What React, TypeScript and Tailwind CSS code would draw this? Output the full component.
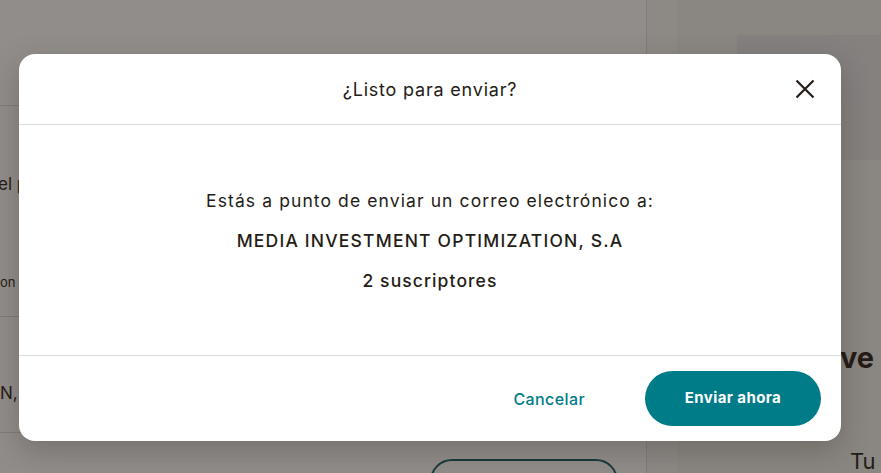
function CloseIcon() {
  return (
    <svg width="20" height="20" viewBox="0 0 20 20" fill="none" stroke="currentColor" strokeWidth="2.2">
      <path d="M1.5 1.5 L18.5 18.5 M18.5 1.5 L1.5 18.5" />
    </svg>
  );
}

function PageBehind() {
  return (
    <div className="flex h-[473px] w-[881px] bg-white text-[#241c15]">
      <div className="flex w-[647px] shrink-0 flex-col border-r border-[#e0e0e0]">
        <div className="h-[106px] shrink-0 border-b border-[#dcdcdc]" />
        <div className="flex h-[211px] shrink-0 flex-col border-b border-[#dcdcdc] pt-[66px]">
          <p className="-ml-[2px] text-[17px] leading-6">el proyecto</p>
          <p className="mt-[76px] text-[13px] leading-5">on</p>
        </div>
        <div className="flex h-[116px] shrink-0 flex-col border-b border-[#dcdcdc] pt-[64px]">
          <p className="text-[17px] leading-6">N,</p>
        </div>
        <div className="flex shrink-0 pl-[430px] pt-[26px]">
          <div className="h-[44px] w-[188px] rounded-full border-2 border-[#0b5b61]" />
        </div>
      </div>
      <div className="w-[30px] shrink-0 bg-[#f7f6f4]" />
      <div className="flex flex-1 flex-col bg-[#f1f0ed]">
        <div className="ml-[60px] mt-[35px] h-[125px] shrink-0 bg-[#e4e7e8]" />
        <p className="ml-[163px] mt-[183px] text-[29px] font-bold leading-none text-[#241c15]">ve</p>
        <p className="ml-[173px] mt-[78px] text-[22px] leading-none text-[#241c15]">Tu</p>
      </div>
    </div>
  );
}

export default function App() {
  return (
    <div className="relative h-[473px] w-[881px] overflow-hidden font-['Inter',sans-serif]">
      <PageBehind />
      <div className="absolute inset-0 bg-[#241c15]/50" />

      <div className="absolute left-[19px] top-[54px] flex w-[822px] flex-col overflow-hidden rounded-2xl bg-white text-[#241c15] shadow-[0_10px_30px_rgba(36,28,21,0.25)]">
        <div className="relative flex h-[71px] items-center justify-center border-b border-[#dcdcdc]">
          <h2 className="pt-[2px] text-[18px] leading-6 tracking-[0.8px]">¿Listo para enviar?</h2>
          <button className="absolute right-[26px] top-[25px] text-[#241c15]">
            <CloseIcon />
          </button>
        </div>

        <div className="flex flex-col items-center gap-4 border-b border-[#dcdcdc] pb-[62px] pt-[64px] text-[17.5px] leading-6 tracking-[1.1px]">
          <p>Estás a punto de enviar un correo electrónico a:</p>
          <p className="font-medium tracking-[1.2px]">MEDIA INVESTMENT OPTIMIZATION, S.A</p>
          <p className="font-medium">2 suscriptores</p>
        </div>

        <div className="flex h-[85px] items-center justify-end gap-[36px] pr-[20px]">
          <button className="px-6 text-[16px] font-medium tracking-[0.4px] text-[#007c89]">Cancelar</button>
          <button className="h-[55px] w-[176px] rounded-full bg-[#007c89] text-[15px] font-bold tracking-[0.4px] text-white">
            Enviar ahora
          </button>
        </div>
      </div>
    </div>
  );
}
